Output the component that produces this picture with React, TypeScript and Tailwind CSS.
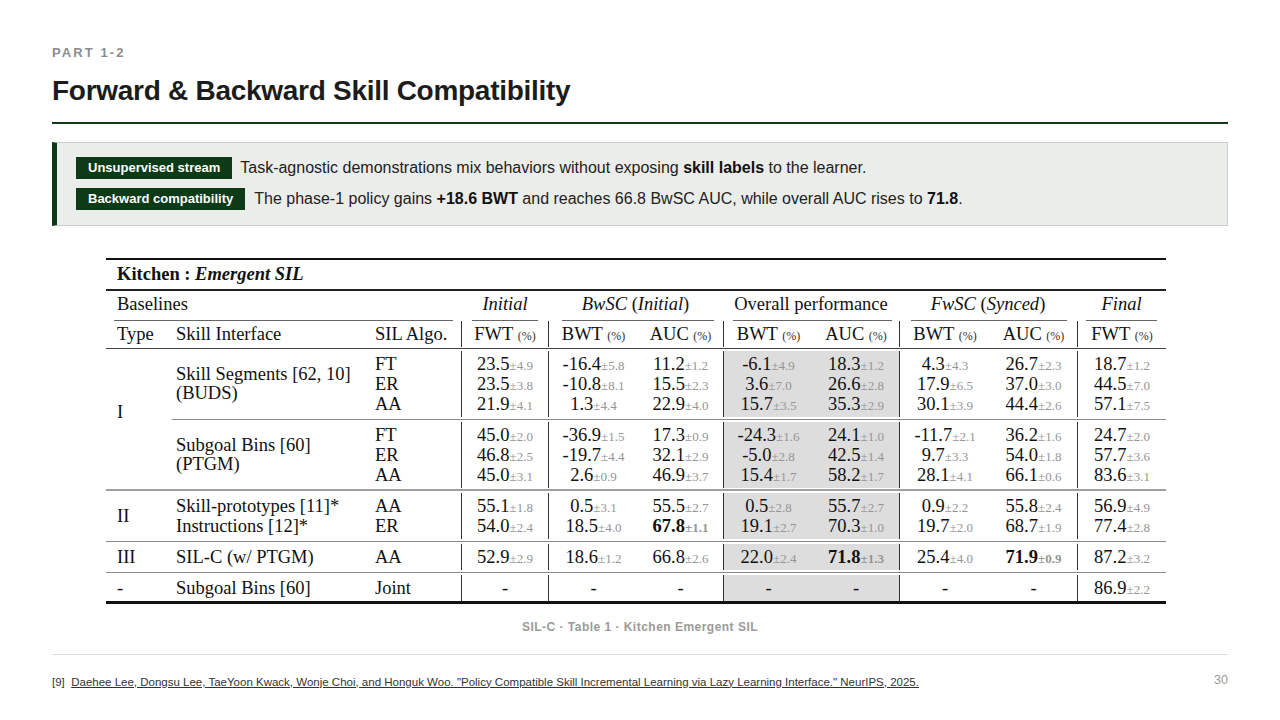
import React from "react";

const WC = [
  "w-[64px]",
  "w-[195px]",
  "w-[96px]",
  "w-[87px]",
  "w-[90px]",
  "w-[85px]",
  "w-[90px]",
  "w-[86px]",
  "w-[91px]",
  "w-[87px]",
  "w-[89px]",
];
const BAR = [false, false, false, true, true, false, true, false, true, false, true];
const SHADE = [false, false, false, false, false, false, true, true, false, false, false];

type V = [string, string?, boolean?] | "-";

function Val({ v }: { v: V }) {
  if (v === "-") return <span>-</span>;
  const [n, s, b] = v;
  return (
    <span>
      <span className={b ? "font-bold" : ""}>{n}</span>
      {s ? (
        <span className={`text-[13px] text-[#959595] ${b ? "font-bold" : ""}`}>±{s}</span>
      ) : null}
    </span>
  );
}

function Sep({ color = "bg-[#8a8a8a]", inset = false, thick = false }: { color?: string; inset?: boolean; thick?: boolean }) {
  return (
    <div className={`h-[5px] flex items-center ${inset ? "pl-[2px]" : ""}`}>
      <div className={`${thick ? "h-[2px]" : "h-px"} w-full ${color}`} />
    </div>
  );
}

type GroupProps = {
  type?: string;
  skill: React.ReactNode;
  skillLines?: boolean;
  algos: string[];
  rows: V[][];
};

function Group({ type, skill, skillLines, algos, rows }: GroupProps) {
  const start = type !== undefined ? 0 : 1;
  const cols: React.ReactNode[] = [];
  for (let i = start; i < 11; i++) {
    let content: React.ReactNode;
    if (i === 0) {
      content = <div className="h-full flex items-center pl-[11px] leading-[20px]">{type}</div>;
    } else if (i === 1) {
      if (skillLines) {
        content = (skill as string[]).map((s, k) => (
          <div key={k} className="h-[20px] leading-[20px] pl-[6px] whitespace-nowrap">
            {s}
          </div>
        ));
      } else {
        content = <div className="h-full flex items-center pl-[6px] leading-[19px] pt-[1px]">{skill}</div>;
      }
    } else if (i === 2) {
      content = algos.map((a, k) => (
        <div key={k} className="h-[20px] leading-[20px] pl-[10px]">
          {a}
        </div>
      ));
    } else {
      content = rows.map((r, k) => (
        <div key={k} className="h-[20px] leading-[20px] text-center whitespace-nowrap">
          <Val v={r[i - 3]} />
        </div>
      ));
    }
    cols.push(
      <div
        key={i}
        className={`${WC[i]} shrink-0 py-[3px] ${BAR[i] ? "border-l border-[#333]" : ""} ${SHADE[i] ? "bg-[#dddddd]" : ""}`}
      >
        {content}
      </div>
    );
  }
  return <div className="flex">{cols}</div>;
}

function Pct({ children }: { children: React.ReactNode }) {
  return (
    <span>
      {children} <span className="text-[12px] text-[#333]">(%)</span>
    </span>
  );
}

export default function App() {
  const serif = { fontFamily: '"Liberation Serif", "Times New Roman", serif' };
  const buds: V[][] = [
    [["23.5", "4.9"], ["-16.4", "5.8"], ["11.2", "1.2"], ["-6.1", "4.9"], ["18.3", "1.2"], ["4.3", "4.3"], ["26.7", "2.3"], ["18.7", "1.2"]],
    [["23.5", "3.8"], ["-10.8", "8.1"], ["15.5", "2.3"], ["3.6", "7.0"], ["26.6", "2.8"], ["17.9", "6.5"], ["37.0", "3.0"], ["44.5", "7.0"]],
    [["21.9", "4.1"], ["1.3", "4.4"], ["22.9", "4.0"], ["15.7", "3.5"], ["35.3", "2.9"], ["30.1", "3.9"], ["44.4", "2.6"], ["57.1", "7.5"]],
  ];
  const ptgm: V[][] = [
    [["45.0", "2.0"], ["-36.9", "1.5"], ["17.3", "0.9"], ["-24.3", "1.6"], ["24.1", "1.0"], ["-11.7", "2.1"], ["36.2", "1.6"], ["24.7", "2.0"]],
    [["46.8", "2.5"], ["-19.7", "4.4"], ["32.1", "2.9"], ["-5.0", "2.8"], ["42.5", "1.4"], ["9.7", "3.3"], ["54.0", "1.8"], ["57.7", "3.6"]],
    [["45.0", "3.1"], ["2.6", "0.9"], ["46.9", "3.7"], ["15.4", "1.7"], ["58.2", "1.7"], ["28.1", "4.1"], ["66.1", "0.6"], ["83.6", "3.1"]],
  ];
  const two: V[][] = [
    [["55.1", "1.8"], ["0.5", "3.1"], ["55.5", "2.7"], ["0.5", "2.8"], ["55.7", "2.7"], ["0.9", "2.2"], ["55.8", "2.4"], ["56.9", "4.9"]],
    [["54.0", "2.4"], ["18.5", "4.0"], ["67.8", "1.1", true], ["19.1", "2.7"], ["70.3", "1.0"], ["19.7", "2.0"], ["68.7", "1.9"], ["77.4", "2.8"]],
  ];
  const three: V[][] = [
    [["52.9", "2.9"], ["18.6", "1.2"], ["66.8", "2.6"], ["22.0", "2.4"], ["71.8", "1.3", true], ["25.4", "4.0"], ["71.9", "0.9", true], ["87.2", "3.2"]],
  ];
  const joint: V[][] = [["-", "-", "-", "-", "-", "-", "-", ["86.9", "2.2"]]];

  return (
    <div
      className="w-[1280px] h-[720px] bg-white px-[52px] pt-[45px] overflow-hidden"
      style={{ fontFamily: '"Liberation Sans", Arial, sans-serif' }}
    >
      <div className="text-[13px] leading-[16px] font-bold tracking-[0.16em] text-[#8d8d8d]">PART 1-2</div>
      <h1 className="mt-[13px] text-[28px] leading-[34px] font-bold text-[#1c1c1c] tracking-[-0.01em]">
        Forward &amp; Backward Skill Compatibility
      </h1>
      <div className="mt-[14px] h-[2px] bg-[#163a1c]" />

      <div className="mt-[18px] h-[84px] bg-[#ebedea] border border-[#c9cfc9] border-l-[5px] border-l-[#0c3816] pl-[19px] pt-[14px] flex flex-col gap-[9px]">
        <div className="flex items-center h-[22px]">
          <span className="h-[22px] px-[12px] bg-[#0d3a17] text-white text-[13px] font-bold leading-[22px] whitespace-nowrap">
            Unsupervised stream
          </span>
          <span className="ml-[8px] text-[16px] text-[#222]">
            Task-agnostic demonstrations mix behaviors without exposing <b className="text-[#111]">skill labels</b> to the learner.
          </span>
        </div>
        <div className="flex items-center h-[22px]">
          <span className="h-[22px] px-[12px] bg-[#0d3a17] text-white text-[13px] font-bold leading-[22px] whitespace-nowrap">
            Backward compatibility
          </span>
          <span className="ml-[9px] text-[16px] text-[#222]">
            The phase-1 policy gains <b className="text-[#111]">+18.6 BWT</b> and reaches 66.8 BwSC AUC, while overall AUC rises to{" "}
            <b className="text-[#111]">71.8</b>.
          </span>
        </div>
      </div>

      {/* Table */}
      <div className="mt-[32px] ml-[54px] w-[1060px] text-[18.5px] text-[#111]" style={serif}>
        <div className="h-[2px] bg-[#111]" />
        <div className="h-[29px] leading-[28px] pl-[11px] font-bold">
          Kitchen : <i>Emergent SIL</i>
        </div>
        <div className="h-[1.5px] bg-[#222]" />
        {/* Baselines row */}
        <div className="flex h-[30px]">
          <div className="w-[355px] flex flex-col">
            <div className="flex-1 leading-[26px] pl-[11px]">Baselines</div>
            <div className="mx-[8px] h-px bg-[#666]" />
          </div>
          <div className="w-[87px] flex flex-col">
            <div className="flex-1 leading-[26px] text-center pl-[1px]">
              <i>Initial</i>
            </div>
            <div className="ml-[11px] mr-[10px] h-px bg-[#666]" />
          </div>
          <div className="w-[175px] flex flex-col">
            <div className="flex-1 leading-[26px] text-center">
              <i>BwSC</i> (<i>Initial</i>)
            </div>
            <div className="ml-[14px] mr-[9px] h-px bg-[#666]" />
          </div>
          <div className="w-[176px] flex flex-col">
            <div className="flex-1 leading-[26px] text-center">Overall performance</div>
            <div className="ml-[10px] mr-[7px] h-px bg-[#666]" />
          </div>
          <div className="w-[178px] flex flex-col">
            <div className="flex-1 leading-[26px] text-center">
              <i>FwSC</i> (<i>Synced</i>)
            </div>
            <div className="ml-[12px] mr-[10px] h-px bg-[#666]" />
          </div>
          <div className="w-[89px] flex flex-col">
            <div className="flex-1 leading-[26px] text-center">
              <i>Final</i>
            </div>
            <div className="ml-[9px] mr-[9px] h-px bg-[#666]" />
          </div>
        </div>
        {/* Type row */}
        <div className="flex h-[26px] leading-[26px]">
          <div className={`${WC[0]} pl-[11px]`}>Type</div>
          <div className={`${WC[1]} pl-[6px]`}>Skill Interface</div>
          <div className={`${WC[2]} pl-[10px]`}>SIL Algo.</div>
          <div className={`${WC[3]} border-l border-[#333] text-center`}>
            <Pct>FWT</Pct>
          </div>
          <div className={`${WC[4]} border-l border-[#333] text-center`}>
            <Pct>BWT</Pct>
          </div>
          <div className={`${WC[5]} text-center`}>
            <Pct>AUC</Pct>
          </div>
          <div className={`${WC[6]} border-l border-[#333] text-center`}>
            <Pct>BWT</Pct>
          </div>
          <div className={`${WC[7]} text-center`}>
            <Pct>AUC</Pct>
          </div>
          <div className={`${WC[8]} border-l border-[#333] text-center`}>
            <Pct>BWT</Pct>
          </div>
          <div className={`${WC[9]} text-center`}>
            <Pct>AUC</Pct>
          </div>
          <div className={`${WC[10]} border-l border-[#333] text-center`}>
            <Pct>FWT</Pct>
          </div>
        </div>
        <div className="h-[4px] flex items-center">
          <div className="h-[1.5px] w-full bg-[#444]" />
        </div>

        {/* Type I */}
        <div className="flex">
          <div className="w-[64px] shrink-0 flex items-center pl-[11px] pb-[12px]">I</div>
          <div className="flex flex-col">
            <Group
              skill={
                <div>
                  Skill Segments [62, 10]
                  <br />
                  (BUDS)
                </div>
              }
              algos={["FT", "ER", "AA"]}
              rows={buds}
            />
            <Sep inset />
            <Group
              skill={
                <div>
                  Subgoal Bins [60]
                  <br />
                  (PTGM)
                </div>
              }
              algos={["FT", "ER", "AA"]}
              rows={ptgm}
            />
          </div>
        </div>
        <Sep thick color="bg-[#a0a0a0]" />
        <Group
          type="II"
          skill={["Skill-prototypes [11]*", "Instructions [12]*"]}
          skillLines
          algos={["AA", "ER"]}
          rows={two}
        />
        <Sep />
        <Group type="III" skill={["SIL-C (w/ PTGM)"]} skillLines algos={["AA"]} rows={three} />
        <Sep />
        <Group type="-" skill={["Subgoal Bins [60]"]} skillLines algos={["Joint"]} rows={joint} />
        <div className="h-[3px] bg-[#111]" />
      </div>

      <div className="mt-[16px] text-center text-[12px] leading-[14px] font-bold text-[#9a9a9a] tracking-[0.04em]">
        SIL-C · Table 1 · Kitchen Emergent SIL
      </div>
      <div className="mt-[20px] h-px bg-[#dcdfdc]" />
      <div className="mt-[17px] flex justify-between items-start">
        <div className="pt-[3px] text-[11.5px] leading-[14px] text-[#333] whitespace-nowrap">
          [9]&nbsp;&nbsp;
          <span className="underline">
            Daehee Lee, Dongsu Lee, TaeYoon Kwack, Wonje Choi, and Honguk Woo. "Policy Compatible Skill Incremental Learning via
            Lazy Learning Interface." NeurIPS, 2025.
          </span>
        </div>
        <div className="text-[12.5px] leading-[16px] text-[#9a9a9a]">30</div>
      </div>
    </div>
  );
}
